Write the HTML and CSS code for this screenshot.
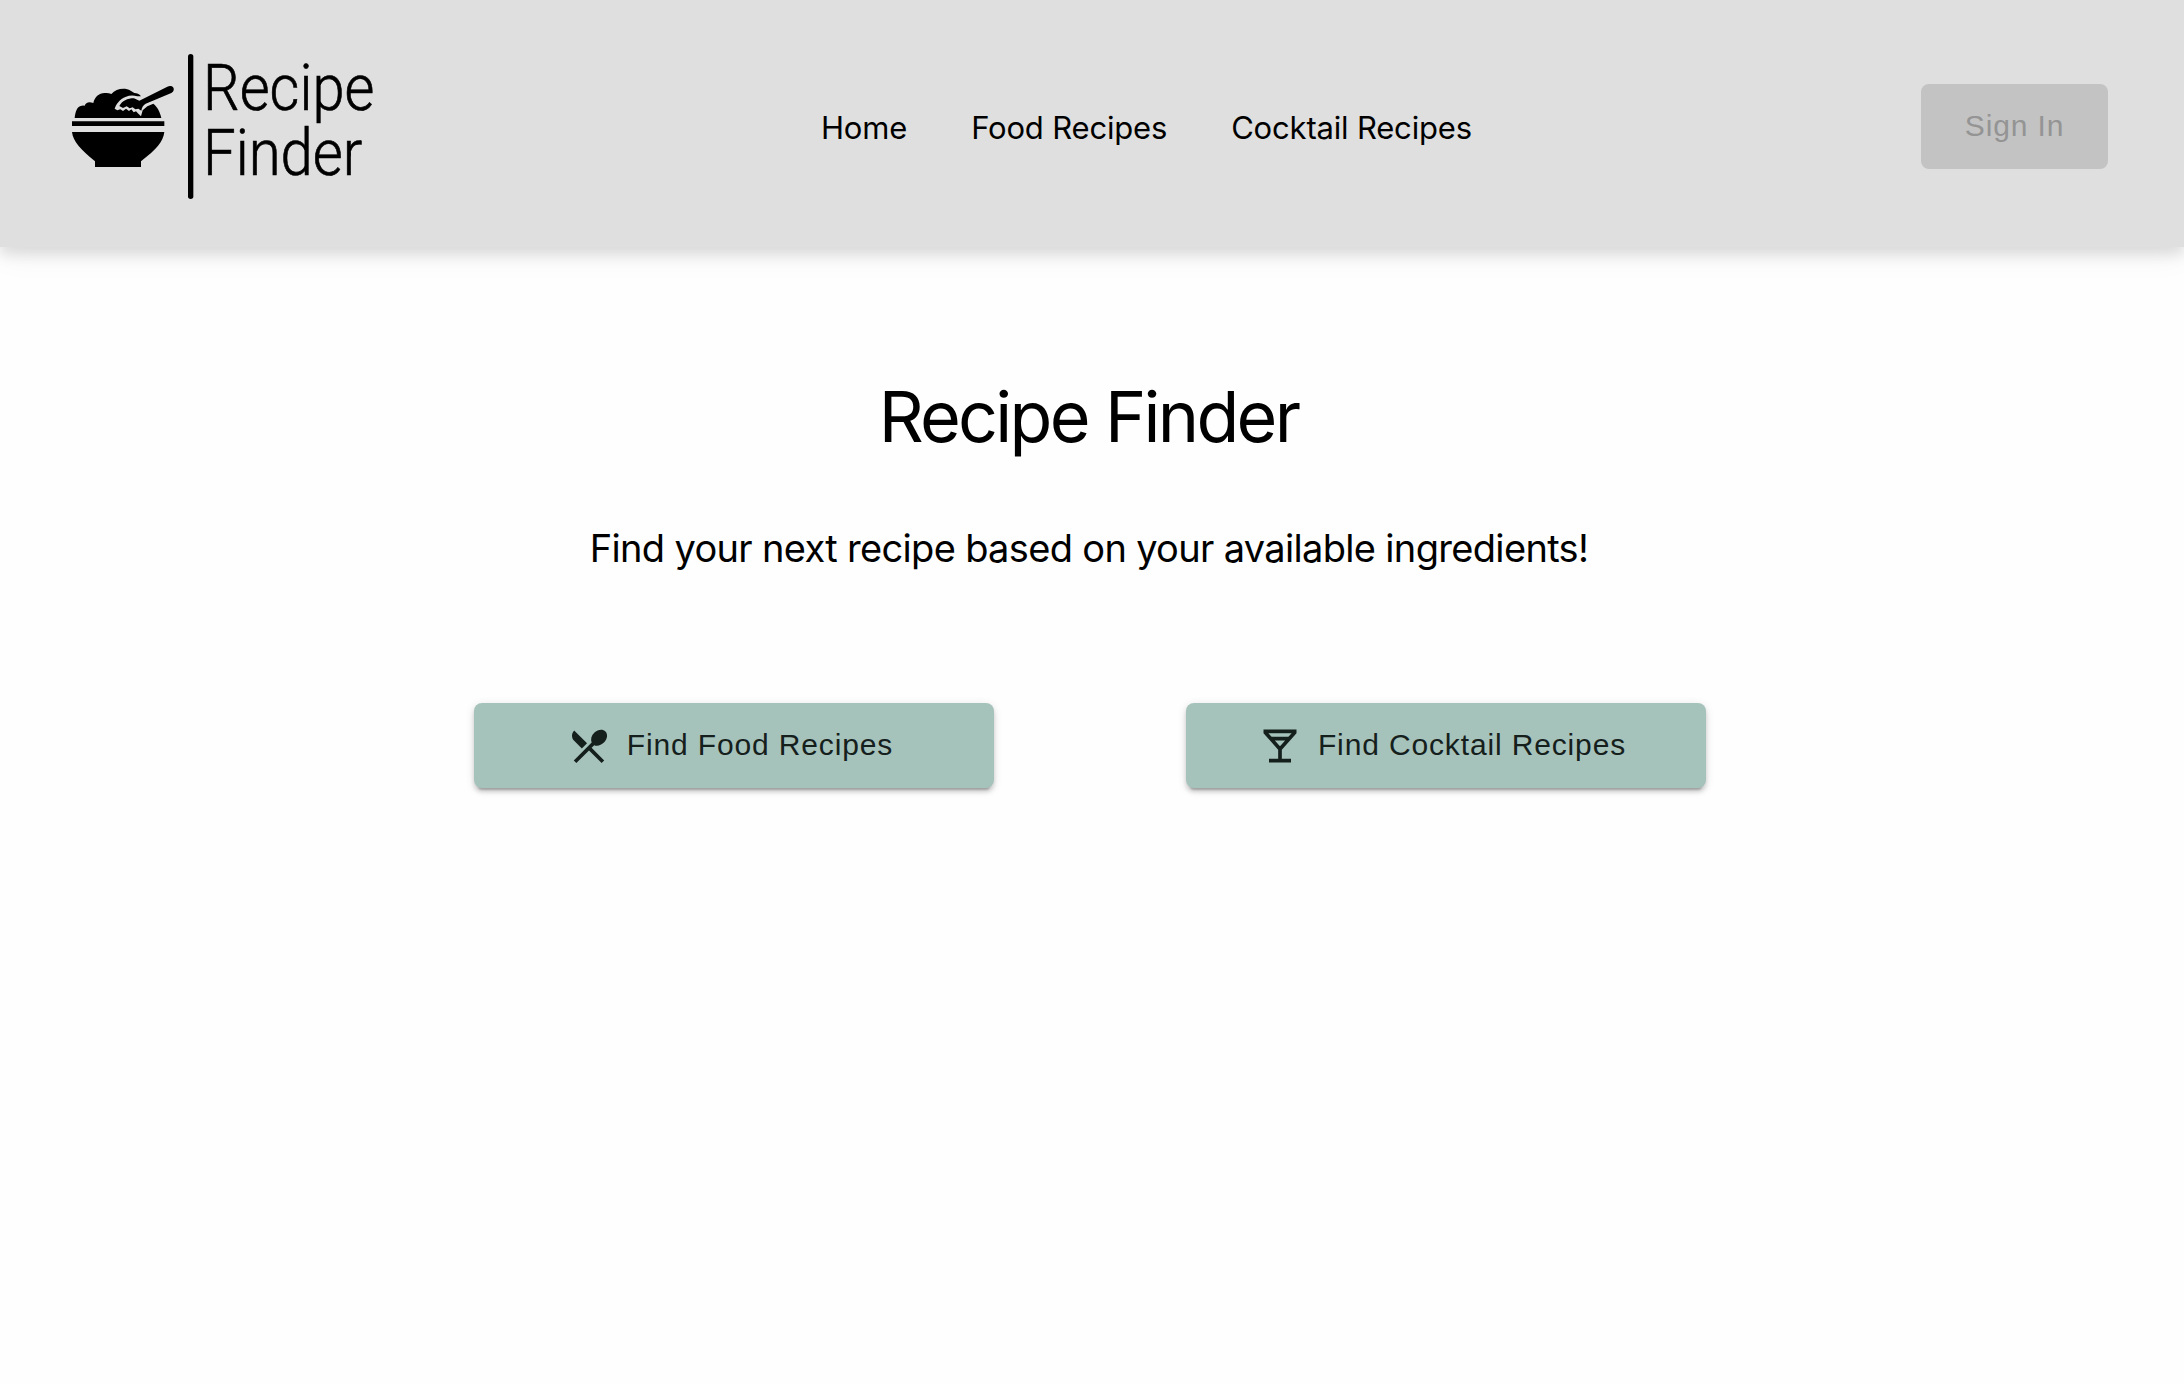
FILE: index.html
```html
<!DOCTYPE html>
<html lang="en">
<head>
<meta charset="utf-8">
<title>Recipe Finder</title>
<link rel="stylesheet" href="styles.css">
</head>
<body>
<header class="bar">
  <a class="logo" href="#">
    <svg width="350" height="170" viewBox="0 0 1050 510" role="img" aria-label="Recipe Finder">
      <path d="M74 234C76 214 82 202 90 199Q98 195 104 197C107 188 116 184 130 189C134 171 146 160 164 159Q176 158 184 162C198 146 224 142 242 152L253 159Q265 159 273 169L262 169Q244 164 228 170C208 177 198 194 194 206L202 211 211 208 219 213 228 206 237 213 244 208 251 217 258 214 265 221 273 229 278 211 292 199 310 191C322 200 330 216 334 234Z"/>
      <path d="M208 198C216 183 232 175 252 175L268 182 352 140C364 134 374 142 371 151Q370 156 364 159L287 191Q276 197 274 212L265 206 256 208 248 202 239 205 230 199 219 204Z"/>
      <path d="M66 244H343V258H66ZM66 276H343C340 305 318 329 273 364V381H135V364C92 328 69 304 66 276Z"/>
      <rect x="414" y="42" width="16" height="435" rx="8"/>
      <text class="logo-text" x="459" y="210" textLength="514" lengthAdjust="spacingAndGlyphs">Recipe</text>
      <text class="logo-text" x="459" y="404" textLength="478" lengthAdjust="spacingAndGlyphs">Finder</text>
    </svg>
  </a>
  <nav class="nav">
    <a href="#">Home</a>
    <a href="#">Food Recipes</a>
    <a href="#">Cocktail Recipes</a>
  </nav>
  <button class="btn signin" disabled>Sign In</button>
</header>
<main class="main">
  <h1 class="title">Recipe Finder</h1>
  <p class="sub">Find your next recipe based on your available ingredients!</p>
  <div class="actions">
    <button class="btn action">
      <svg class="icon" viewBox="0 0 24 24"><path d="M8.1 13.34l2.83-2.83L3.91 3.5c-1.56 1.56-1.56 4.09 0 5.66l4.19 4.18zm6.78-1.81c1.53.71 3.68.21 5.27-1.38 1.91-1.91 2.28-4.65.81-6.12-1.46-1.46-4.2-1.1-6.12.81-1.59 1.59-2.09 3.74-1.38 5.27L3.7 19.87l1.41 1.41L12 14.41l6.88 6.88 1.41-1.41L13.41 13l1.47-1.47z"/></svg>
      <span>Find Food Recipes</span>
    </button>
    <button class="btn action">
      <svg class="icon" viewBox="0 0 24 24"><path fill-rule="evenodd" d="M21 5V3H3v2l8 9v5H6v2h12v-2h-5v-5l8-9zM5.66 5h12.69l-1.78 2H7.43zM9.2 9h5.6L12 12.15z"/></svg>
      <span>Find Cocktail Recipes</span>
    </button>
  </div>
</main>
</body>
</html>
```
FILE: styles.css
```css
* { box-sizing: border-box; }
html { background: #fefefe; }
body { margin: 0; min-height: 100vh; color: #000; font-family: Inter, sans-serif; }
.bar {
  display: flex; align-items: flex-start; height: 247px; padding: 40px 76px 0 50px;
  background: #dfdfdf;
  box-shadow: 0 8px 12px 0 rgba(0,0,0,.1), 0 10px 28px 0 rgba(0,0,0,.05);
}
.logo { display: block; width: 350px; height: 170px; color: #000; }
.logo svg { display: block; }
.logo-text { font-family: Roboto, sans-serif; font-weight: 300; font-size: 197px; stroke: #000; stroke-width: 2px; }
.nav { display: flex; gap: 64px; margin: 68px 0 0 421px; font-size: 31px; line-height: 40px; }
.nav a { color: #000; text-decoration: none; white-space: nowrap; letter-spacing: -0.18px; }
.btn {
  display: flex; align-items: center; justify-content: center; height: 85px; border: 0; border-radius: 8px;
  font-family: "Liberation Sans", sans-serif; font-size: 30px; letter-spacing: .857px; line-height: 52px; padding: 0 0 2px;
}
.signin { width: 187px; margin: 44px 0 0 auto; background: #c3c3c3; color: #949494; }
.main { display: flex; flex-direction: column; align-items: center; padding-right: 4px; }
.title { margin: 127px 0 0; padding-right: 3px; font-size: 70px; line-height: 86px; font-weight: 400; letter-spacing: -2.7px; }
.sub { margin: 64px 0 0; padding-right: 2px; font-size: 38px; line-height: 48px; letter-spacing: -.67px; }
.actions { display: flex; gap: 192px; margin-top: 131px; }
.action {
  width: 520px; padding-right: 8px; gap: 16px; background: #a6c3bb; color: #15201d; white-space: nowrap;
  box-shadow: 0 6px 2px -4px rgba(0,0,0,.2), 0 4px 4px 0 rgba(0,0,0,.14), 0 2px 10px 0 rgba(0,0,0,.12);
}
.icon { width: 44px; height: 44px; fill: currentColor; position: relative; top: 1px; }
```
